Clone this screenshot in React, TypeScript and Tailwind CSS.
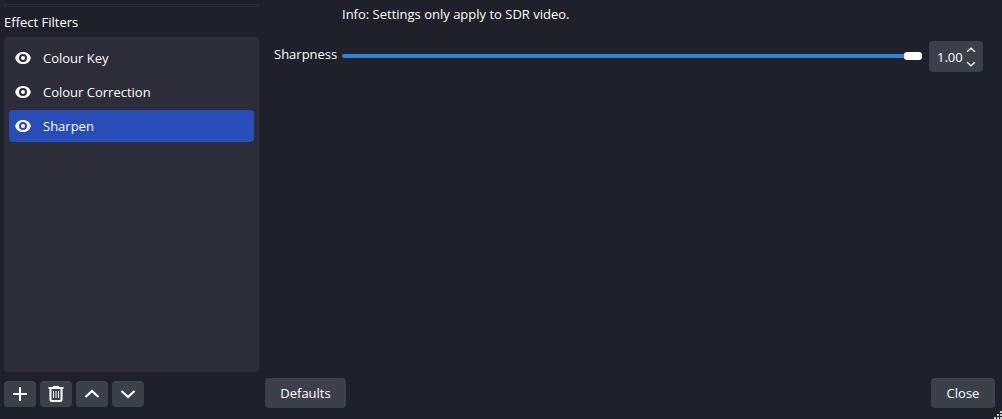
import { useState } from 'react'
import clsx from 'clsx'

interface Filter {
  id: string
  name: string
  enabled: boolean
}

const INITIAL_FILTERS: Filter[] = [
  { id: 'colour-key', name: 'Colour Key', enabled: true },
  { id: 'colour-correction', name: 'Colour Correction', enabled: true },
  { id: 'sharpen', name: 'Sharpen', enabled: true },
]

function EyeIcon() {
  return (
    <svg viewBox="0 0 16 12" className="h-3 w-4" aria-hidden="true">
      <path
        d="M8 0C4 0 1.200 2 0.200 6c1 4 3.800 6 7.800 6s6.800-2 7.800-6c-1-4-3.800-6-7.800-6z"
        fill="#fefefe"
      />
      <circle cx="8" cy="6" r="3" fill="none" stroke="currentColor" strokeWidth="2" />
    </svg>
  )
}

function PlusIcon() {
  return (
    <svg viewBox="0 0 16 16" className="size-4" fill="none" stroke="currentColor" strokeWidth="2" aria-hidden="true">
      <path d="M8 1v14M1 8h14" />
    </svg>
  )
}

function TrashIcon() {
  return (
    <svg viewBox="0 0 16 16" className="size-4" fill="none" stroke="currentColor" aria-hidden="true">
      <path d="M0.500 2h15" strokeWidth="2" />
      <path d="M5 0.500h6" strokeWidth="1" />
      <path d="M2.500 3v10.500q0 1.500 1.500 1.500h8q1.500 0 1.500-1.500V3" strokeWidth="2" />
      <path d="M5.500 5v7M8 5v7M10.500 5v7" strokeWidth="1" />
    </svg>
  )
}

function ChevronIcon({ down = false, small = false }: { down?: boolean; small?: boolean }) {
  return (
    <svg
      viewBox="0 0 16 10"
      className={small ? 'h-[6px] w-[10px]' : 'h-[10px] w-4'}
      fill="none"
      stroke="currentColor"
      strokeWidth="2.200"
      aria-hidden="true"
    >
      <path d={down ? 'M1.500 2 8 8l6.500-6' : 'M1.500 8 8 2l6.500 6'} />
    </svg>
  )
}

export default function App() {
  const [filters, setFilters] = useState(INITIAL_FILTERS)
  const [selected, setSelected] = useState('sharpen')
  const [sharpness, setSharpness] = useState(1)

  function toggleFilter(id: string) {
    setFilters((prev) => prev.map((f) => (f.id === id ? { ...f, enabled: !f.enabled } : f)))
  }

  function step(amount: number) {
    setSharpness((prev) => Math.min(1, Math.max(0, prev + amount)))
  }

  const toolButton = 'flex h-[26px] w-8 items-center justify-center rounded bg-[#3c404b]'

  return (
    <div className="flex h-screen flex-col gap-[6px] bg-[#1f212a] px-1 pb-[11px] font-['Open_Sans',sans-serif] text-[13px] leading-[18px] text-[#fefefe]">
      <div className="flex min-h-0 flex-1 gap-[6px]">
        {/* Filter list */}
        <section className="flex w-[255px] shrink-0 flex-col pt-1">
          <div className="h-[3px] border border-[#2c2d38]" />
          <h2 className="my-[6px]">Effect Filters</h2>
          <ul className="flex min-h-0 flex-1 flex-col gap-[2px] rounded bg-[#2c2d38] p-[5px]">
            {filters.map((filter) => (
              <li
                key={filter.id}
                className={clsx(
                  'flex h-8 items-center gap-3 rounded pl-[6px]',
                  filter.id === selected ? 'bg-[#284cb8]' : 'bg-[#2c2d38]'
                )}
              >
                <button
                  aria-label={`Toggle ${filter.name}`}
                  aria-pressed={filter.enabled}
                  onClick={() => toggleFilter(filter.id)}
                  className={clsx(
                    filter.id === selected ? 'text-[#284cb8]' : 'text-[#2c2d38]',
                    !filter.enabled && 'opacity-40'
                  )}
                >
                  <EyeIcon />
                </button>
                <button className="flex-1 text-left" onClick={() => setSelected(filter.id)}>
                  {filter.name}
                </button>
              </li>
            ))}
          </ul>
        </section>

        {/* Properties */}
        <section className="min-w-0 flex-1 pt-[5px] pr-[15px] pl-[9px]">
          <p className="pl-[68px]">Info: Settings only apply to SDR video.</p>
          <div className="mt-[18px] flex items-start">
            <div className="flex h-[30px] min-w-0 flex-1 items-center">
              <label htmlFor="sharpness" className="w-[68px] shrink-0 pb-1">
                Sharpness
              </label>
              <input
                id="sharpness"
                type="range"
                min={0}
                max={1}
                step={0.01}
                value={sharpness}
                onChange={(e) => setSharpness(Number(e.target.value))}
                style={{
                  backgroundImage: `linear-gradient(to right, #2a82da ${sharpness * 100}%, #3c404b ${sharpness * 100}%)`,
                }}
                className="h-1 min-w-0 flex-1 appearance-none rounded-full [&::-webkit-slider-thumb]:h-2 [&::-webkit-slider-thumb]:w-[18px] [&::-webkit-slider-thumb]:appearance-none [&::-webkit-slider-thumb]:rounded-[3px] [&::-webkit-slider-thumb]:bg-white"
              />
            </div>
            <div className="ml-[7px] flex h-[31px] w-[54px] items-center rounded bg-[#3c404b] pl-2">
              <input
                aria-label="Sharpness value"
                readOnly
                value={sharpness.toFixed(2)}
                className="w-[29px] bg-transparent outline-none"
              />
              <div className="flex flex-col gap-2">
                <button aria-label="Increase" onClick={() => step(0.01)}>
                  <ChevronIcon small />
                </button>
                <button aria-label="Decrease" onClick={() => step(-0.01)}>
                  <ChevronIcon small down />
                </button>
              </div>
            </div>
          </div>
        </section>
      </div>

      {/* Bottom bar */}
      <footer className="flex items-end gap-[6px] pr-[3px]">
        <div className="flex w-[255px] gap-1 pb-px">
          <button aria-label="Add filter" className={toolButton}>
            <PlusIcon />
          </button>
          <button aria-label="Remove filter" className={toolButton}>
            <TrashIcon />
          </button>
          <button aria-label="Move up" className={toolButton}>
            <ChevronIcon />
          </button>
          <button aria-label="Move down" className={toolButton}>
            <ChevronIcon down />
          </button>
        </div>
        <button className="h-[30px] w-[81px] rounded bg-[#3c404b]" onClick={() => setSharpness(0.08)}>
          Defaults
        </button>
        <button className="ml-auto h-[30px] w-16 rounded bg-[#3c404b]">Close</button>
      </footer>

      {/* Resize grip */}
      <svg viewBox="0 0 8 8" className="fixed right-0 bottom-0 size-2" fill="#c8c8c8" aria-hidden="true">
        <path d="M6 0h2v2H6zM3 3h2v2H3zM6 3h2v2H6zM0 6h2v2H0zM3 6h2v2H3zM6 6h2v2H6z" />
      </svg>
    </div>
  )
}
